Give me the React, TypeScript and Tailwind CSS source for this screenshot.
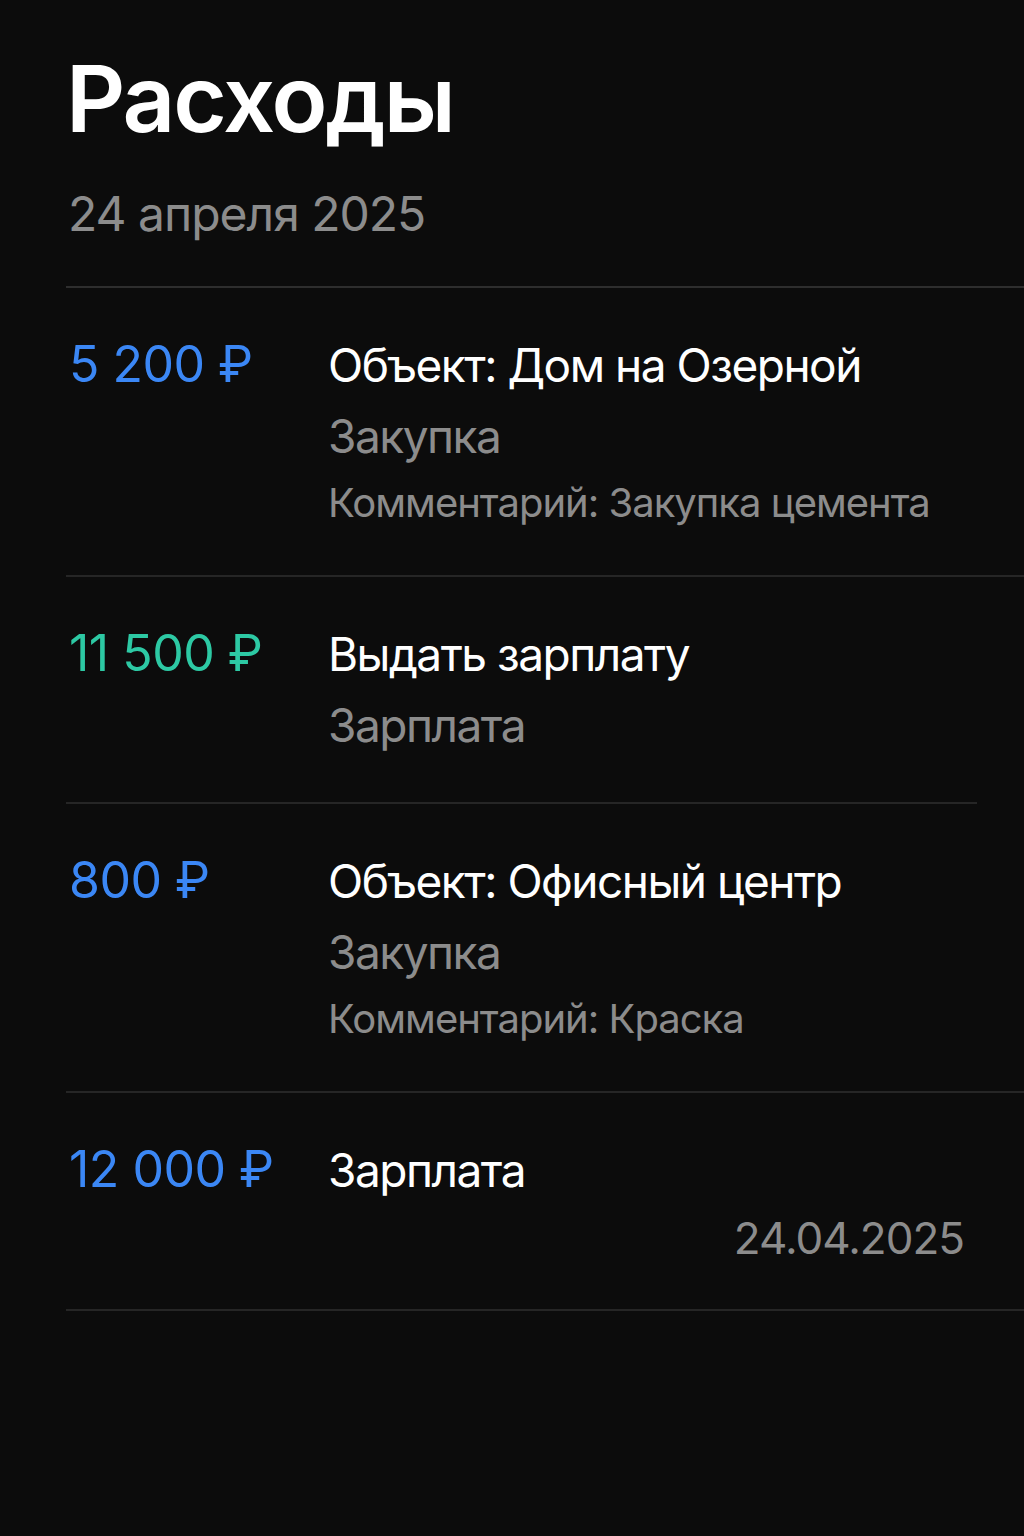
import React from 'react';

type Expense = {
  amount: string;
  color: string;
  title: string;
  category?: string;
  comment?: string;
  date?: string;
  shortLine?: boolean;
};

const expenses: Expense[] = [
  {
    amount: '5 200 ₽',
    color: 'text-[#3b87f5]',
    title: 'Объект: Дом на Озерной',
    category: 'Закупка',
    comment: 'Комментарий: Закупка цемента',
  },
  {
    amount: '11 500 ₽',
    color: 'text-[#2dc9a4]',
    title: 'Выдать зарплату',
    category: 'Зарплата',
    shortLine: true,
  },
  {
    amount: '800 ₽',
    color: 'text-[#3b87f5]',
    title: 'Объект: Офисный центр',
    category: 'Закупка',
    comment: 'Комментарий: Краска',
  },
  {
    amount: '12 000 ₽',
    color: 'text-[#3b87f5]',
    title: 'Зарплата',
    date: '24.04.2025',
  },
];

const Row: React.FC<{ item: Expense }> = ({ item }) => {
  return (
    <div className={`border-b-2 border-[#262626] ${item.shortLine ? 'mr-[47px]' : ''}`}>
      <div className={`flex pt-[47px] ${item.date ? 'pb-[43px]' : 'pb-[47px]'}`}>
        <div className={`w-[262px] shrink-0 text-[50px] leading-[58px] tracking-[-0.5px] pl-[3px] ${item.color}`}>
          {item.amount}
        </div>
        <div className="flex-1 flex flex-col">
          <div className="text-[46px] leading-[60px] tracking-[-1.5px] text-white">{item.title}</div>
          {item.category && (
            <div className="text-[46px] leading-[60px] tracking-[-1.5px] mt-[11px] text-[#8c8c8c]">{item.category}</div>
          )}
          {item.comment && (
            <div className="text-[40px] leading-[50px] tracking-[-1px] mt-[12px] text-[#8c8c8c]">{item.comment}</div>
          )}
          {item.date && (
            <div className="text-[44px] leading-[56px] tracking-[-1px] mt-[10px] pr-[60px] text-right text-[#8c8c8c]">{item.date}</div>
          )}
        </div>
      </div>
    </div>
  );
};

export default function App() {
  return (
    <div className="min-h-[1536px] bg-[#0c0c0c] pl-[66px] font-['Inter','Roboto',sans-serif]">
      <div className="pt-[44px] pb-[42px] border-b-2 border-[#2e2e2e]">
        <h1 className="text-[92px] leading-[110px] font-semibold text-white tracking-[-2px]">Расходы</h1>
        <div className="text-[48px] leading-[60px] tracking-[-1px] mt-[30px] text-[#8c8c8c] pl-[2px]">24 апреля 2025</div>
      </div>
      {expenses.map((e, i) => (
        <Row key={i} item={e} />
      ))}
    </div>
  );
}
